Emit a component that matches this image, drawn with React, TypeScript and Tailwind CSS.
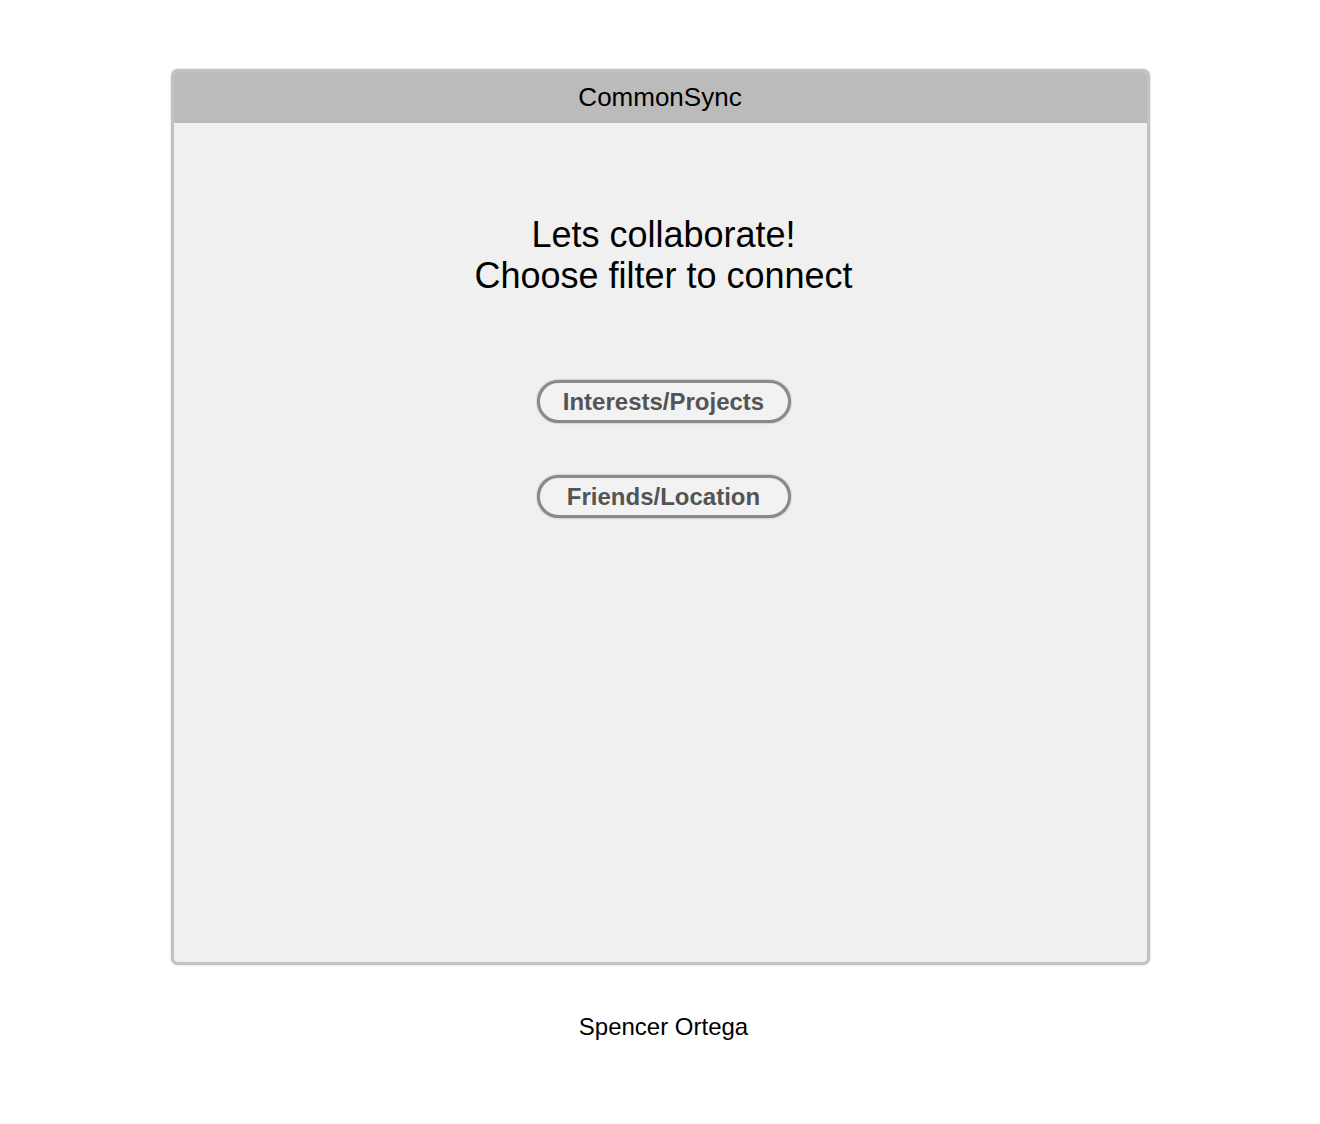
export default function App() {
  return (
    <div
      className="min-h-[1124px] bg-white pt-[69px]"
      style={{ fontFamily: "'Liberation Sans', Arial, sans-serif" }}
    >
      {/* Window frame */}
      <div className="mx-auto flex h-[896px] w-[979px] flex-col overflow-hidden rounded-[7px] border-[3px] border-[#c2c2c2] bg-[#f0f0f0] shadow-[0_0_2px_rgba(0,0,0,0.25)]">
        <div className="flex h-[51px] items-center justify-center bg-[#bbbbbb] text-[26px] text-black">
          CommonSync
        </div>

        <div className="flex flex-col items-center pl-[7px] pt-[91px]">
          <h1 className="text-center text-[36px] leading-[41px] text-black">
            Lets collaborate!
            <br />
            Choose filter to connect
          </h1>

          <div className="mt-[84px] flex flex-col items-center gap-[52px]">
            <button className="flex h-[43px] w-[254px] items-center justify-center rounded-full border-[3px] border-[#8a8a8a] bg-[#f2f2f2] text-[24px] font-bold text-[#545454] shadow-[0_0_2px_rgba(0,0,0,0.4)]">
              Interests/Projects
            </button>
            <button className="flex h-[43px] w-[254px] items-center justify-center rounded-full border-[3px] border-[#8a8a8a] bg-[#f2f2f2] text-[24px] font-bold text-[#545454] shadow-[0_0_2px_rgba(0,0,0,0.4)]">
              Friends/Location
            </button>
          </div>
        </div>
      </div>

      <div className="mt-[48px] pl-[7px] text-center text-[24px] leading-[28px] text-black">
        Spencer Ortega
      </div>
    </div>
  );
}
